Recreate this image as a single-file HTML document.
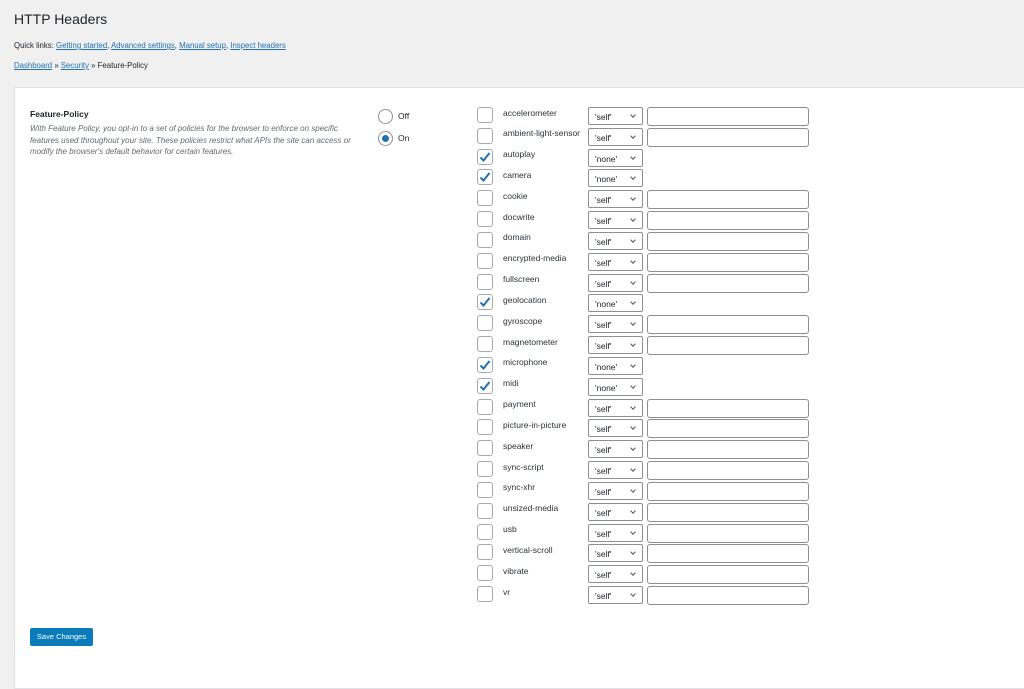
<!DOCTYPE html>
<html><head><meta charset="utf-8"><style>
body{margin:0;background:#f0f0f1;font-family:"Liberation Sans",sans-serif;color:#1d2327;width:1024px;height:670px;overflow:hidden;position:relative}
a{color:#2271b1;text-decoration:underline}
.abs{position:absolute}
h1{position:absolute;left:14px;top:11px;margin:0;font-size:14px;font-weight:400}
.ql{left:14px;top:41px;font-size:7.8px}
.bc{left:14px;top:61px;font-size:7.8px}
.panel{left:14px;top:87px;width:1010px;height:600px;background:#fff;border:1px solid #e2e2e4}
.cb{position:absolute;left:477px;width:14px;height:14px;border:1px solid #a7aaad;border-radius:3px;background:#fff}
.lb{position:absolute;left:503px;font-size:8.5px;color:#2c3338}
.sel{position:absolute;left:588px;width:55px;height:18px;border:1px solid #8c8f94;border-radius:2px;background:#fff;font-size:8.5px;box-sizing:border-box;padding:4px 0 0 6px}
.sel:after{content:"";position:absolute;right:7px;top:5px;width:3px;height:3px;border-right:1px solid #50575e;border-bottom:1px solid #50575e;transform:rotate(45deg)}
.inp{position:absolute;left:647px;width:162px;height:19px;border:1px solid #8c8f94;border-radius:3px;box-sizing:border-box;background:#fff}
.radio{position:absolute;left:378px;width:13px;height:13px;border:1px solid #8c8f94;border-radius:50%;background:#fff}
</style></head><body>
<h1>HTTP Headers</h1>
<div class="abs ql">Quick links: <a>Getting started</a>, <a>Advanced settings</a>, <a>Manual setup</a>, <a>Inspect headers</a></div>
<div class="abs bc"><a>Dashboard</a> » <a>Security</a> » Feature-Policy</div>
<div class="abs panel"></div>
<div class="abs" style="left:30px;top:109px;font-size:8.5px;font-weight:bold">Feature-Policy</div>
<div class="abs" style="left:30px;top:123px;width:326px;font-size:8px;font-style:italic;color:#646970;line-height:11.5px">With Feature Policy, you opt-in to a set of policies for the browser to enforce on specific features used throughout your site. These policies restrict what APIs the site can access or modify the browser's default behavior for certain features.</div>
<div class="radio" style="top:109px"></div><div class="abs" style="left:398px;top:111px;font-size:8.5px">Off</div>
<div class="radio" style="top:131px"><div style="position:absolute;left:3px;top:3px;width:7px;height:7px;border-radius:50%;background:#2271b1"></div></div><div class="abs" style="left:398px;top:133px;font-size:8.5px">On</div>
<div id="rows"></div>
<div class="abs" style="left:30px;top:628px;width:63px;height:18px;background:#0a7cba;border-radius:2px;color:#fff;font-size:7.5px;text-align:center;line-height:18px">Save Changes</div>
<script>
var n=["accelerometer","ambient-light-sensor","autoplay","camera","cookie","docwrite","domain","encrypted-media","fullscreen","geolocation","gyroscope","magnetometer","microphone","midi","payment","picture-in-picture","speaker","sync-script","sync-xhr","unsized-media","usb","vertical-scroll","vibrate","vr"];
var on={autoplay:1,camera:1,geolocation:1,microphone:1,midi:1};var h="";
n.forEach(function(x,i){var y=107+i*20.83;
h+='<div class="cb" style="top:'+y+'px">'+(on[x]?'<svg width="14" height="14" viewBox="0 0 14 14" style="position:absolute;left:0;top:0"><path d="M2.5 7.5 L5.5 10.5 L11.5 3" fill="none" stroke="#2271b1" stroke-width="2"/></svg>':'')+'</div>';
h+='<div class="lb" style="top:'+(y+0.5)+'px">'+x+'</div>';
h+='<div class="sel" style="top:'+y+'px">'+(on[x]?"'none'":"'self'")+'</div>';
if(!on[x])h+='<div class="inp" style="top:'+y+'px"></div>';});
document.getElementById("rows").innerHTML=h;
</script>
</body></html>
